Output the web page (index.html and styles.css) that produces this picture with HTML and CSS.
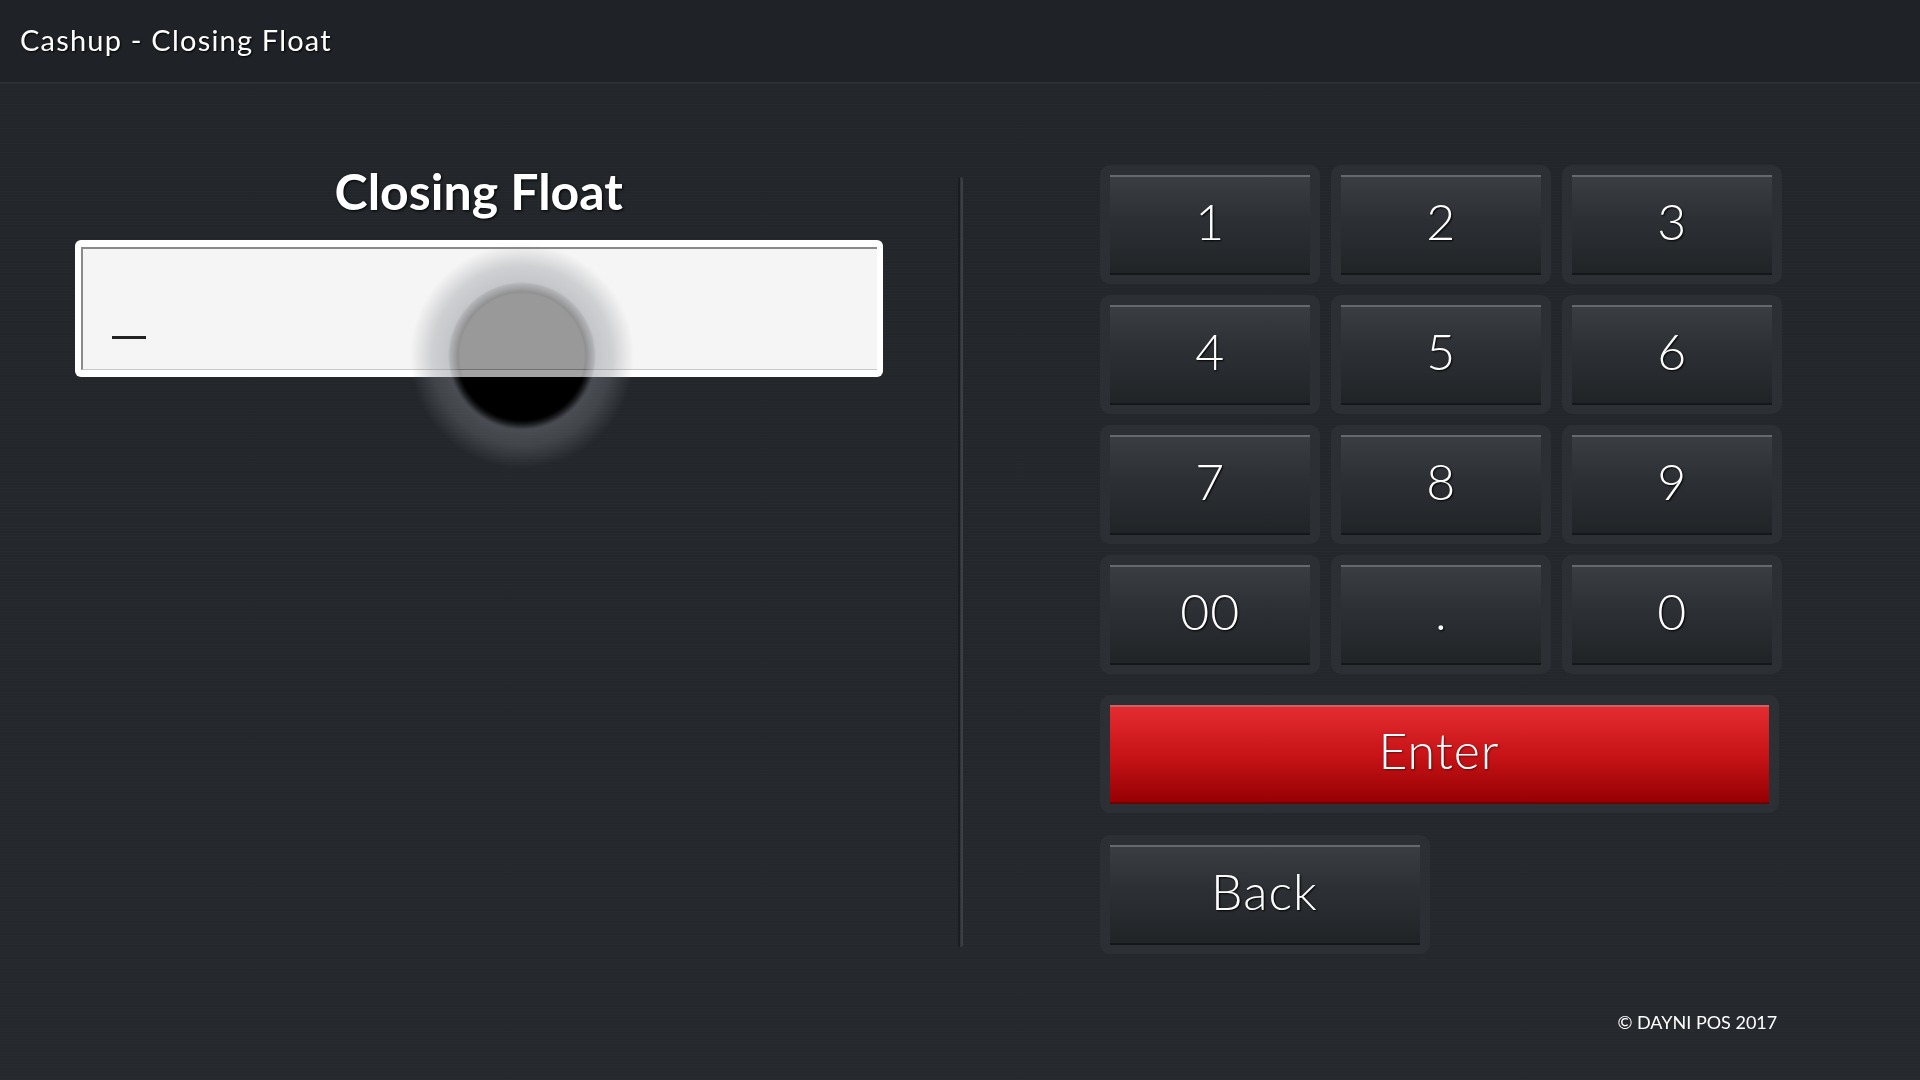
FILE: index.html
```html
<!DOCTYPE html>
<html lang="en">
<head>
<meta charset="utf-8">
<title>Cashup - Closing Float</title>
<link rel="stylesheet" href="styles.css">
</head>
<body>
<header class="topbar">
  <h1 class="topbar-title">Cashup - Closing Float</h1>
</header>
<main class="layout">
  <section class="entry">
    <h2 class="entry-title">Closing Float</h2>
    <div class="field">
      <div class="field-inner"><span class="cursor"></span></div>
    </div>
  </section>
  <div class="divider"></div>
  <section class="pad">
    <div class="keys">
      <div class="bezel"><button class="key">1</button></div>
      <div class="bezel"><button class="key">2</button></div>
      <div class="bezel"><button class="key">3</button></div>
      <div class="bezel"><button class="key">4</button></div>
      <div class="bezel"><button class="key">5</button></div>
      <div class="bezel"><button class="key">6</button></div>
      <div class="bezel"><button class="key">7</button></div>
      <div class="bezel"><button class="key">8</button></div>
      <div class="bezel"><button class="key">9</button></div>
      <div class="bezel"><button class="key">00</button></div>
      <div class="bezel"><button class="key">.</button></div>
      <div class="bezel"><button class="key">0</button></div>
    </div>
    <div class="bezel bezel-enter"><button class="key key-enter">Enter</button></div>
    <div class="bezel bezel-back"><button class="key">Back</button></div>
    <p class="copyright">© DAYNI POS 2017</p>
  </section>
</main>
<div class="touch"><div class="touch-ring"></div><div class="touch-core"></div></div>
</body>
</html>
```
FILE: styles.css
```css
* { box-sizing: border-box; }
html, body { margin: 0; padding: 0; }
body {
  width: 1920px;
  height: 1080px;
  overflow: hidden;
  position: relative;
  font-family: Lato, "Open Sans", sans-serif;
  color: #fff;
  background-color: #24282c;
  background-image:
    repeating-linear-gradient(0deg, rgba(255,255,255,0.012) 0 1px, rgba(0,0,0,0) 1px 3px),
    linear-gradient(180deg, #22262a 0%, #25292d 100%);
}
.topbar {
  height: 84px;
  background: #1f2327;
  border-bottom: 2px solid #2c3034;
  display: flex;
  align-items: center;
  padding: 0 0 4px 20px;
}
.topbar-title {
  margin: 0;
  font-size: 29px;
  font-weight: 400;
  letter-spacing: 1.2px;
  text-shadow: 1px 1px 2px #000;
}
.layout {
  display: grid;
  grid-template-columns: 1fr 5px 1fr;
  height: 996px;
}
.entry {
  display: flex;
  flex-direction: column;
  align-items: center;
  padding-top: 79px;
}
.entry-title {
  margin: 0;
  font-size: 50px;
  line-height: 56px;
  font-weight: 700;
  letter-spacing: 0;
  text-shadow: 1px 1px 3px #000;
}
.field {
  margin-top: 21px;
  width: 808px;
  height: 137px;
  background: #fff;
  border-radius: 6px;
  padding: 7px 6px;
}
.field-inner {
  height: 100%;
  background: #f5f5f5;
  border-top: 2px solid #8a8a8a;
  border-left: 2px solid #8a8a8a;
  border-bottom: 1px solid #c8c8c8;
  display: flex;
  align-items: flex-end;
  padding: 0 0 30px 29px;
}
.cursor {
  display: block;
  width: 34px;
  height: 3px;
  background: #222;
}
.divider {
  margin-top: 93px;
  height: 770px;
  border-radius: 3px;
  background: linear-gradient(90deg, #1a1d20 0 2px, #30343a 2px 3px, #3c4045 3px 5px);
}
.pad {
  display: flex;
  flex-direction: column;
  align-items: center;
  padding-top: 81px;
}
.keys {
  display: grid;
  grid-template-columns: repeat(3, 220px);
  grid-auto-rows: 119px;
  gap: 11px;
}
.bezel {
  background: #2c3034;
  border-radius: 10px;
  padding: 10px 10px 9px;
  display: flex;
}
.key {
  flex: 1;
  margin: 0;
  border: 0;
  border-top: 2px solid #66696c;
  border-bottom: 2px solid #151719;
  background: linear-gradient(180deg, #3a3e42 0%, #2c3034 45%, #212427 100%);
  color: #fff;
  font-family: Lato, "Open Sans", sans-serif;
  font-size: 50px;
  font-weight: 300;
  letter-spacing: 1px;
  text-shadow: 1px 1px 2px #000;
  padding: 0 0 9px;
  display: flex;
  align-items: center;
  justify-content: center;
}
.bezel-enter {
  margin-top: 21px;
  width: 679px;
  height: 118px;
  align-self: flex-start;
  margin-left: 137px;
}
.key-enter {
  border-top: 2px solid #c96466;
  border-bottom: 2px solid #6e0002;
  background: linear-gradient(180deg, #e42c2f 0%, #c81417 50%, #960003 100%);
  text-shadow: 1px 1px 2px rgba(0,0,0,0.5);
}
.bezel-back {
  margin-top: 22px;
  width: 330px;
  height: 119px;
  align-self: flex-start;
  margin-left: 137px;
}
.copyright {
  margin: 58px 0 0;
  width: 682px;
  text-align: right;
  padding-right: 5px;
  font-size: 18px;
  line-height: 20px;
  font-weight: 400;
  letter-spacing: 0;
}
.touch {
  position: absolute;
  left: 410px;
  top: 244px;
  width: 224px;
  height: 224px;
  display: grid;
  place-items: center;
  pointer-events: none;
}
.touch-ring, .touch-core {
  grid-area: 1 / 1;
  border-radius: 50%;
}
.touch-ring {
  width: 224px;
  height: 224px;
  background: radial-gradient(circle closest-side, rgba(127,130,138,0) 0, rgba(127,130,138,0) 62px, rgba(127,130,138,0.42) 72px, rgba(127,130,138,0.32) 90px, rgba(127,130,138,0) 112px);
}
.touch-core {
  width: 150px;
  height: 150px;
  backdrop-filter: brightness(0.59) contrast(1.5);
  -webkit-mask-image: radial-gradient(circle closest-side, #000 64px, rgba(0,0,0,0) 74px);
  mask-image: radial-gradient(circle closest-side, #000 64px, rgba(0,0,0,0) 74px);
}
```
